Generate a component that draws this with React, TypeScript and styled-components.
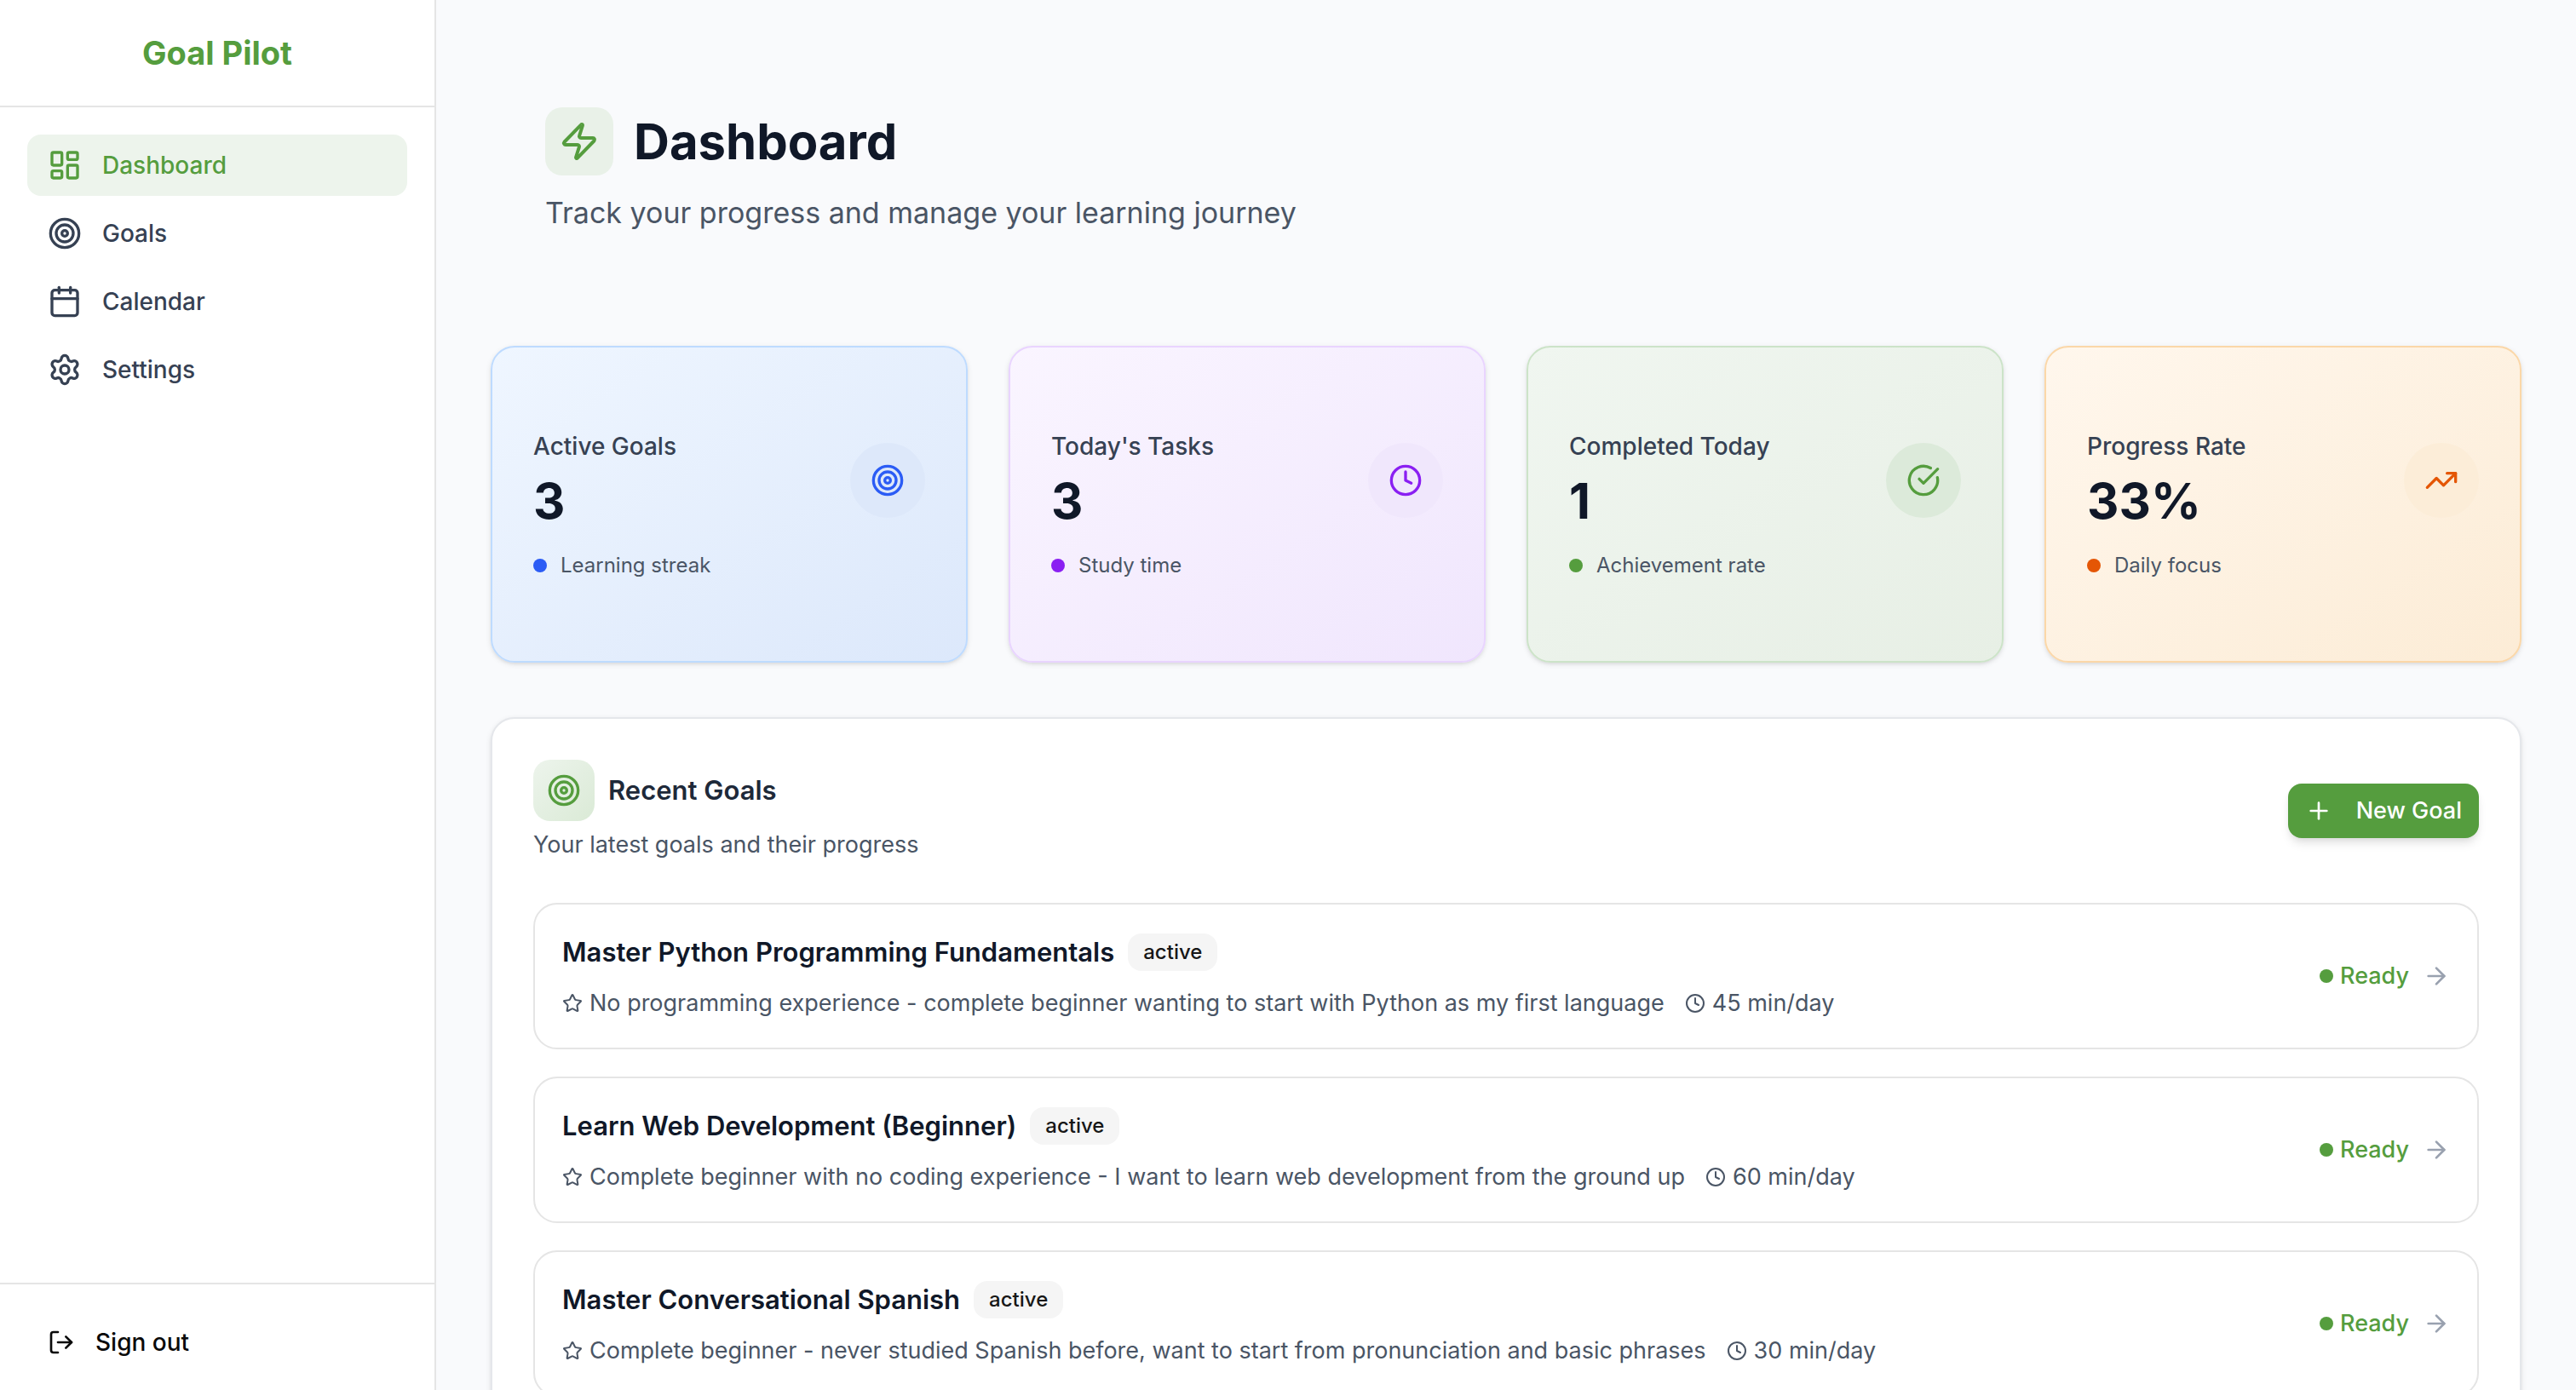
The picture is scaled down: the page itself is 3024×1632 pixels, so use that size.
import React from 'react';
import styled, { createGlobalStyle } from 'styled-components';
import {
  ArrowRight,
  Calendar,
  CircleCheckBig,
  Clock,
  LayoutDashboard,
  LogOut,
  Plus,
  Settings,
  Star,
  Target,
  TrendingUp,
  Zap,
  type LucideIcon,
} from 'lucide-react';

const color = {
  green: '#559d3e',
  ink: '#101828',
  heading: '#1e2939',
  body: '#364153',
  muted: '#4a5565',
  faint: '#99a1af',
  line: '#e5e5e5',
  panelLine: '#e5e7eb',
};

const shadowSmall = '0 2px 6px rgba(0, 0, 0, 0.1), 0 2px 4px -2px rgba(0, 0, 0, 0.1)';
const shadowMedium = '0 8px 12px -2px rgba(0, 0, 0, 0.1), 0 4px 8px -4px rgba(0, 0, 0, 0.1)';

const GlobalStyle = createGlobalStyle`
  *, *::before, *::after { box-sizing: border-box; }
  body {
    margin: 0;
    background: #f9fafc;
    color: ${color.ink};
    font-family: Inter, "Liberation Sans", sans-serif;
    font-size: 28px;
    line-height: 40px;
    -webkit-font-smoothing: antialiased;
  }
  h1, h2, h3, p, ul { margin: 0; padding: 0; }
  ul { list-style: none; }
  a { color: inherit; text-decoration: none; }
  button { font: inherit; cursor: pointer; border: 0; }
  svg { flex: none; display: block; }
`;

const Shell = styled.div`
  display: flex;
  height: 100vh;
  overflow: hidden;
`;

const Sidebar = styled.aside`
  flex: none;
  width: 512px;
  display: flex;
  flex-direction: column;
  background: #fff;
  border-right: 2px solid ${color.line};
`;

const Brand = styled.div`
  display: flex;
  align-items: center;
  justify-content: center;
  height: 126px;
  border-bottom: 2px solid ${color.line};
  color: ${color.green};
  font-size: 38px;
  line-height: 56px;
  font-weight: 700;
`;

const Nav = styled.nav`
  flex: 1;
  display: flex;
  flex-direction: column;
  gap: 8px;
  padding: 32px;
`;

const NavLink = styled.a<{ $active?: boolean }>`
  display: flex;
  align-items: center;
  gap: 24px;
  padding: 16px 24px;
  border-radius: 16px;
  font-weight: 500;
  color: ${(p) => (p.$active ? color.green : color.body)};
  background: ${(p) => (p.$active ? '#edf4ec' : 'transparent')};
`;

const SidebarFooter = styled.div`
  padding: 32px 32px 20px;
  border-top: 2px solid ${color.line};
`;

const SignOut = styled.button`
  display: flex;
  align-items: center;
  gap: 24px;
  width: 100%;
  padding: 16px 24px;
  border-radius: 16px;
  background: transparent;
  color: #0a0a0a;
  font-weight: 500;
`;

const Main = styled.main`
  flex: 1;
  min-width: 0;
  display: flex;
  flex-direction: column;
  gap: 64px;
  padding: 64px;
  overflow: hidden;
`;

const PageHeader = styled.header`
  display: flex;
  flex-direction: column;
  gap: 16px;
  padding: 62px 64px 64px;
`;

const TitleRow = styled.div<{ $gap: number }>`
  display: flex;
  align-items: center;
  gap: ${(p) => p.$gap}px;
`;

const IconTile = styled.span<{ $size: number; $fill: string }>`
  display: grid;
  place-items: center;
  width: ${(p) => p.$size}px;
  height: ${(p) => p.$size}px;
  border-radius: 20px;
  background: ${(p) => p.$fill};
  color: ${color.green};
`;

const PageTitle = styled.h1`
  font-size: 58px;
  line-height: 72px;
  font-weight: 700;
`;

const PageSubtitle = styled.p`
  font-size: 34px;
  line-height: 56px;
  color: ${color.muted};
`;

const StatGrid = styled.section`
  display: grid;
  grid-template-columns: repeat(4, minmax(0, 1fr));
  gap: 48px;
`;

const StatCard = styled.article<{ $from: string; $to: string; $line: string }>`
  display: flex;
  flex-direction: column;
  gap: 24px;
  padding: 96px 48px;
  border: 2px solid ${(p) => p.$line};
  border-radius: 28px;
  background: linear-gradient(to bottom right, ${(p) => p.$from}, ${(p) => p.$to}) border-box;
  box-shadow: ${shadowSmall};
`;

const StatTop = styled.div`
  display: flex;
  align-items: center;
  justify-content: space-between;
`;

const StatText = styled.div`
  display: flex;
  flex-direction: column;
  gap: 8px;
`;

const StatLabel = styled.h2`
  font-size: 28px;
  line-height: 40px;
  font-weight: 500;
  color: ${color.body};
`;

const StatValue = styled.p`
  font-size: 58px;
  line-height: 72px;
  font-weight: 700;
`;

const StatBadge = styled.span<{ $fill: string; $ink: string }>`
  display: grid;
  place-items: center;
  width: 88px;
  height: 88px;
  border-radius: 50%;
  background: ${(p) => p.$fill};
  color: ${(p) => p.$ink};
`;

const StatNote = styled.p`
  display: flex;
  align-items: center;
  gap: 16px;
  font-size: 24px;
  line-height: 32px;
  color: ${color.muted};
`;

const Dot = styled.span<{ $fill: string }>`
  flex: none;
  width: 16px;
  height: 16px;
  border-radius: 50%;
  background: ${(p) => p.$fill};
`;

const Panel = styled.section`
  flex: none;
  display: flex;
  flex-direction: column;
  gap: 48px;
  padding: 48px;
  border: 2px solid ${color.panelLine};
  border-radius: 28px;
  background: #fff;
  box-shadow: ${shadowSmall};
`;

const PanelHeader = styled.div`
  display: flex;
  align-items: center;
  justify-content: space-between;
`;

const PanelHeading = styled.div`
  display: flex;
  flex-direction: column;
  gap: 8px;
`;

const PanelTitle = styled.h2`
  font-size: 31px;
  line-height: 48px;
  font-weight: 600;
  color: ${color.heading};
`;

const PanelSubtitle = styled.p`
  font-size: 27px;
  color: ${color.muted};
`;

const NewGoal = styled.button`
  display: flex;
  align-items: center;
  gap: 28px;
  height: 64px;
  padding: 0 20px;
  border-radius: 16px;
  background: ${color.green};
  color: #fff;
  font-size: 27px;
  font-weight: 500;
  box-shadow: ${shadowMedium};
`;

const GoalList = styled.ul`
  display: flex;
  flex-direction: column;
  gap: 32px;
`;

const GoalLink = styled.a`
  display: flex;
  align-items: center;
  justify-content: space-between;
  padding: 32px;
  border: 2px solid ${color.line};
  border-radius: 28px;
`;

const GoalInfo = styled.div`
  display: flex;
  flex-direction: column;
  gap: 16px;
`;

const GoalTitle = styled.h3`
  font-size: 31px;
  line-height: 48px;
  font-weight: 600;
`;

const Tag = styled.span`
  padding: 6px 18px;
  border-radius: 16px;
  background: #f5f5f5;
  color: #171717;
  font-size: 24px;
  line-height: 32px;
  font-weight: 500;
`;

const GoalMeta = styled.div`
  display: flex;
  align-items: center;
  gap: 24px;
  font-size: 27px;
  color: ${color.muted};
`;

const MetaItem = styled.span`
  display: flex;
  align-items: center;
  gap: 8px;
`;

const GoalState = styled.div`
  display: flex;
  align-items: center;
  gap: 16px;
  color: ${color.faint};
`;

const Ready = styled.span`
  display: flex;
  align-items: center;
  gap: 8px;
  font-size: 27px;
  font-weight: 500;
  color: ${color.green};
`;

const navItems: { label: string; icon: LucideIcon }[] = [
  { label: 'Dashboard', icon: LayoutDashboard },
  { label: 'Goals', icon: Target },
  { label: 'Calendar', icon: Calendar },
  { label: 'Settings', icon: Settings },
];

const stats = [
  { label: 'Active Goals', value: '3', note: 'Learning streak', icon: Target, ink: '#2b5cf5', from: '#eff6ff', to: '#dce8fb', line: '#bedbff', badge: '#dde8fa' },
  { label: "Today's Tasks", value: '3', note: 'Study time', icon: Clock, ink: '#8a1ff2', from: '#faf5ff', to: '#f0e6fd', line: '#e9d4ff', badge: '#f0e7fc' },
  { label: 'Completed Today', value: '1', note: 'Achievement rate', icon: CircleCheckBig, ink: color.green, from: '#f0f6f0', to: '#e7efe5', line: '#cce3c8', badge: '#dceada' },
  { label: 'Progress Rate', value: '33%', note: 'Daily focus', icon: TrendingUp, ink: '#e45605', from: '#fff7ed', to: '#fcecd6', line: '#fbd7a8', badge: '#fcedd8' },
];

const goals = [
  {
    title: 'Master Python Programming Fundamentals',
    level: 'No programming experience - complete beginner wanting to start with Python as my first language',
    pace: '45 min/day',
  },
  {
    title: 'Learn Web Development (Beginner)',
    level: 'Complete beginner with no coding experience - I want to learn web development from the ground up',
    pace: '60 min/day',
  },
  {
    title: 'Master Conversational Spanish',
    level: 'Complete beginner - never studied Spanish before, want to start from pronunciation and basic phrases',
    pace: '30 min/day',
  },
];

export default function App() {
  return (
    <>
      <GlobalStyle />
      <Shell>
        <Sidebar>
          <Brand>Goal Pilot</Brand>
          <Nav>
            {navItems.map(({ label, icon: Icon }, i) => (
              <NavLink key={label} href="#" $active={i === 0}>
                <Icon size={40} />
                {label}
              </NavLink>
            ))}
          </Nav>
          <SidebarFooter>
            <SignOut type="button">
              <LogOut size={32} />
              Sign out
            </SignOut>
          </SidebarFooter>
        </Sidebar>

        <Main>
          <PageHeader>
            <TitleRow $gap={24}>
              <IconTile $size={80} $fill="#e9f1e8">
                <Zap size={48} />
              </IconTile>
              <PageTitle>Dashboard</PageTitle>
            </TitleRow>
            <PageSubtitle>Track your progress and manage your learning journey</PageSubtitle>
          </PageHeader>

          <StatGrid>
            {stats.map(({ label, value, note, icon: Icon, ink, from, to, line, badge }) => (
              <StatCard key={label} $from={from} $to={to} $line={line}>
                <StatTop>
                  <StatText>
                    <StatLabel>{label}</StatLabel>
                    <StatValue>{value}</StatValue>
                  </StatText>
                  <StatBadge $fill={badge} $ink={ink}>
                    <Icon size={40} />
                  </StatBadge>
                </StatTop>
                <StatNote>
                  <Dot $fill={ink} />
                  {note}
                </StatNote>
              </StatCard>
            ))}
          </StatGrid>

          <Panel>
            <PanelHeader>
              <PanelHeading>
                <TitleRow $gap={16}>
                  <IconTile $size={72} $fill="linear-gradient(to bottom right, #edf4ec, #daead6)">
                    <Target size={40} />
                  </IconTile>
                  <PanelTitle>Recent Goals</PanelTitle>
                </TitleRow>
                <PanelSubtitle>Your latest goals and their progress</PanelSubtitle>
              </PanelHeading>
              <NewGoal type="button">
                <Plus size={32} />
                New Goal
              </NewGoal>
            </PanelHeader>
            <GoalList>
              {goals.map(({ title, level, pace }) => (
                <li key={title}>
                  <GoalLink href="#">
                    <GoalInfo>
                      <TitleRow $gap={16}>
                        <GoalTitle>{title}</GoalTitle>
                        <Tag>active</Tag>
                      </TitleRow>
                      <GoalMeta>
                        <MetaItem>
                          <Star size={24} />
                          {level}
                        </MetaItem>
                        <MetaItem>
                          <Clock size={24} />
                          {pace}
                        </MetaItem>
                      </GoalMeta>
                    </GoalInfo>
                    <GoalState>
                      <Ready>
                        <Dot $fill={color.green} />
                        Ready
                      </Ready>
                      <ArrowRight size={32} />
                    </GoalState>
                  </GoalLink>
                </li>
              ))}
            </GoalList>
          </Panel>
        </Main>
      </Shell>
    </>
  );
}
